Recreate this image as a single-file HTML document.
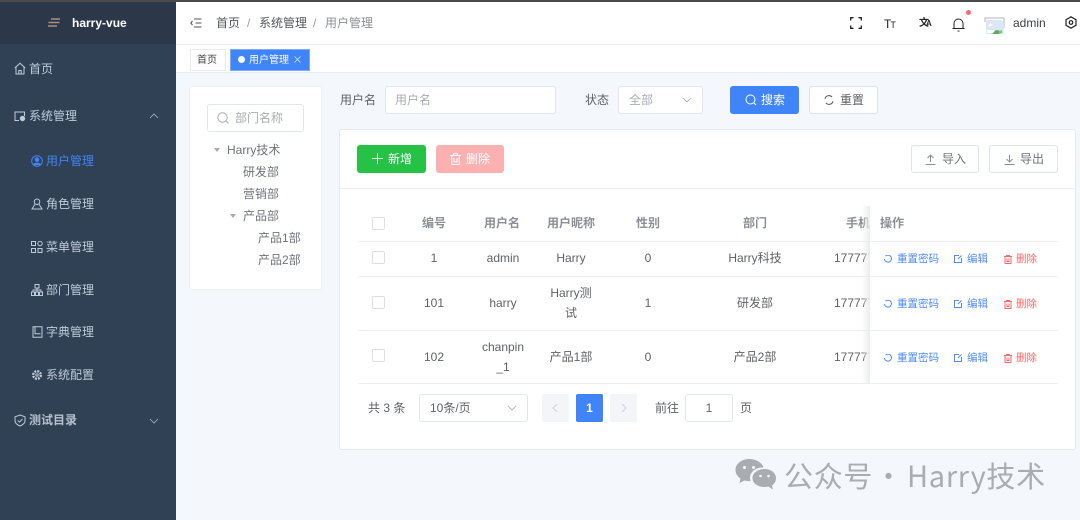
<!DOCTYPE html>
<html style="background:#f4f7fc"><head><meta charset="utf-8"><style>
*{box-sizing:border-box;margin:0;padding:0}
html,body{width:1080px;height:520px;overflow:hidden;background:#f4f7fc;font-family:"Liberation Sans","Noto Sans CJK SC",sans-serif;font-size:12px;color:#606266}
body{filter:blur(.3px)}
.a,.t{position:absolute}
.t{white-space:nowrap;line-height:18px;height:18px}
.c{transform:translateX(-50%)}
.box{position:absolute;background:#fff;border:1px solid #e2e6ef;border-radius:3px}
.m{color:#bfcbd9}
.th{font-weight:bold;color:#8c8f96}
.cb{position:absolute;left:372px;width:13px;height:13px;border:1px solid #dcdfe6;border-radius:2px;background:#fff}
.hl{position:absolute;left:358px;width:700px;height:1px;background:#ebeef5}
.btn{position:absolute;height:28px;border-radius:3px;border:1px solid #dfe3ec;background:#fff}
.link{font-size:10.5px;color:#4f8cf7}.del{font-size:10.5px;color:#f56c6c}
svg{position:absolute;fill:none;stroke:currentColor}
</style></head><body>
<div class="a" style="left:0;top:0;width:1080px;height:2px;background:#4a4a4a"></div>
<div class="a" style="left:0;top:2px;width:176px;height:518px;background:#304156"></div>
<div class="a" style="left:0;top:2px;width:176px;height:42px;background:#2c3749"></div>
<div class="a" style="left:176px;top:2px;width:904px;height:70px;background:#fff"></div>
<div class="a" style="left:176px;top:44px;width:904px;height:1px;background:#eceff4"></div>
<div class="a" style="left:176px;top:72px;width:904px;height:1px;background:#e8ecf3"></div>

<svg style="left:47px;top:17px;color:#a8907e" width="14" height="12" viewBox="0 0 14 12" stroke-width="1.400"><path d="M4 2h9M1.500 5.500h11M1 9h9"/></svg>
<div class="t" style="left:72px;top:14px;color:#fff;font-weight:bold">harry-vue</div>

<svg class="m" style="left:14px;top:62px;color:#bfcbd9" width="12" height="13" viewBox="0 0 12 13"><path d="M.8 6L6 1.200 11.200 6M2 5v7h8V5M4.800 12V8.500h2.400V12"/></svg>
<div class="t m" style="left:29px;top:60px">首页</div>
<svg style="left:14px;top:111px;color:#bfcbd9" width="12" height="11" viewBox="0 0 12 11"><path d="M5 9.500H1V1h9.500v4"/><circle cx="8.500" cy="7.500" r="2.200" fill="#bfcbd9"/></svg>
<div class="t m" style="left:29px;top:107px">系统管理</div>
<svg style="left:149px;top:113px;color:#a7b3c1" width="10" height="6" viewBox="0 0 10 6" stroke-width=".8"><path d="M1 5l4-4 4 4"/></svg>

<svg style="left:31px;top:155px;color:#3f84f8" width="12" height="12" viewBox="0 0 12 12"><circle cx="6" cy="6" r="5.300"/><circle cx="6" cy="4.600" r="1.800" fill="#3f84f8"/><path d="M2.600 10c.5-2.500 6.300-2.500 6.800 0" fill="#3f84f8"/></svg>
<div class="t" style="left:46px;top:152px;color:#3f84f8">用户管理</div>
<svg style="left:31px;top:198px;color:#bfcbd9" width="12" height="12" viewBox="0 0 12 12"><circle cx="6" cy="3.800" r="2.800"/><path d="M3.800 6.500L1 11h10L8.200 6.500"/></svg>
<div class="t m" style="left:46px;top:195px">角色管理</div>
<svg style="left:31px;top:241px;color:#bfcbd9" width="12" height="12" viewBox="0 0 12 12"><rect x=".5" y=".5" width="4" height="4"/><circle cx="9" cy="2.500" r="2.200"/><rect x=".5" y="7.500" width="4" height="4"/><rect x="7" y="7.500" width="4" height="4"/></svg>
<div class="t m" style="left:46px;top:238px">菜单管理</div>
<svg style="left:31px;top:284px;color:#bfcbd9" width="12" height="12" viewBox="0 0 12 12"><rect x="4" y=".5" width="4" height="3.500"/><path d="M2 8V6h8v2M6 4v4"/><rect x=".5" y="8" width="3" height="3.500"/><rect x="4.500" y="8" width="3" height="3.500"/><rect x="8.500" y="8" width="3" height="3.500"/></svg>
<div class="t m" style="left:46px;top:281px">部门管理</div>
<svg style="left:32px;top:326px;color:#bfcbd9" width="11" height="12" viewBox="0 0 11 12"><path d="M1 .8h9v10.400H1zM3 .8v7h5.500"/></svg>
<div class="t m" style="left:46px;top:323px">字典管理</div>
<svg style="left:31px;top:369px;color:#bfcbd9" width="12" height="12" viewBox="0 0 12 12"><circle cx="6" cy="6" r="3.800" stroke-width="2.400" stroke-dasharray="2 1"/><circle cx="6" cy="6" r="1.200"/></svg>
<div class="t m" style="left:46px;top:366px">系统配置</div>
<svg style="left:14px;top:414px;color:#bfcbd9" width="12" height="13" viewBox="0 0 12 13"><path d="M6 1l5 1.800v4c0 2.500-2.500 4.200-5 5.200-2.500-1-5-2.700-5-5.200v-4zM3.800 6.500L5.500 8l3-3"/></svg>
<div class="t m" style="left:29px;top:411px;font-weight:bold;color:#b5c0cd">测试目录</div>
<svg style="left:149px;top:418px;color:#a7b3c1" width="10" height="6" viewBox="0 0 10 6" stroke-width=".8"><path d="M1 1l4 4 4-4"/></svg>

<svg style="left:190px;top:18px;color:#555" width="12" height="10" viewBox="0 0 12 10"><path d="M4 1h7.500M5.500 5h6M4 9h7.500M2.500 3L.8 5l1.700 2"/></svg>
<div class="t" style="left:216px;top:14px;color:#55585d">首页</div>
<div class="t" style="left:247px;top:14px;color:#9a9da3">/</div>
<div class="t" style="left:259px;top:14px;color:#55585d">系统管理</div>
<div class="t" style="left:313px;top:14px;color:#9a9da3">/</div>
<div class="t" style="left:325px;top:14px;color:#8d9096">用户管理</div>

<svg style="left:850px;top:17px;color:#222" width="12" height="12" viewBox="0 0 12 12" stroke-width="1.300"><path d="M.7 3.500V.7h2.800M8.500.7h2.800v2.800M11.300 8.500v2.800H8.500M3.500 11.300H.7V8.500"/></svg>
<div class="t" style="left:884px;top:15px;color:#222;font-size:12px;letter-spacing:-1px">T<span style="font-size:9px">T</span></div>
<div class="t" style="left:919px;top:15px;color:#222;font-size:10px;font-weight:bold">文<span style="font-size:8px;margin-left:-3px">A</span></div>
<svg style="left:952px;top:17px;color:#222" width="13" height="15" viewBox="0 0 13 15"><path d="M2 11V6.500a4.500 4.500 0 0 1 9 0V11M.5 11.500h12M5.500 14h2"/></svg>
<div class="a" style="left:966px;top:10px;width:5px;height:5px;border-radius:50%;background:#f56c6c"></div>
<svg style="left:984px;top:17px;stroke:none" width="21" height="18" viewBox="0 0 21 18"><path d="M1 3V1h19v2M1 1v4M20 1v10" stroke="#b0b4ba" stroke-width="1"/><path fill="#dbe6f8" d="M2 3h15l3 3v11H2z"/><path fill="#fff" d="M6 6l3 2-5 2zM3 13h7v3H3z"/><path fill="#5aae55" d="M8 17l4-4 5 1-2 3z"/><path fill="#7fc77a" d="M15 14l3-1v3l-3 1z"/></svg>
<div class="t" style="left:1013px;top:14px;color:#3c3f44;font-size:12px">admin</div>
<svg style="left:1065px;top:16px;color:#222" width="12" height="13" viewBox="0 0 12 13" stroke-width="1.200"><path d="M6 .8l5 2.900v5.600l-5 2.900-5-2.900V3.700z"/><circle cx="6" cy="6.500" r="1.800"/></svg>

<div class="box" style="left:190px;top:49px;width:36px;height:22px;border-radius:0;border-color:#e6e9ef"></div>
<div class="t" style="left:197px;top:52px;font-size:10px;color:#444">首页</div>
<div class="a" style="left:230px;top:49px;width:80px;height:22px;background:#3f84f8;border:1px solid #7eaaf7"></div>
<div class="a" style="left:238px;top:56px;width:7px;height:7px;border-radius:50%;background:#fff"></div>
<div class="t" style="left:249px;top:52px;font-size:10px;color:#fff">用户管理</div>
<svg style="left:294px;top:56px;color:#dfe9fd" width="7" height="7" viewBox="0 0 7 7" stroke-width=".8"><path d="M.5.500l6 6M6.500.500l-6 6"/></svg>

<div class="box" style="left:189px;top:86px;width:133px;height:204px;border-color:#eceff5"></div>
<div class="box" style="left:207px;top:104px;width:97px;height:28px"></div>
<svg style="left:217px;top:112px;color:#a8abb2" width="12" height="12" viewBox="0 0 12 12"><circle cx="5.500" cy="5.500" r="4.700"/><path d="M9 9l2.500 2.500"/></svg>
<div class="t" style="left:235px;top:109px;color:#a8abb2">部门名称</div>
<div class="a" style="left:214px;top:148px;border:3.500px solid transparent;border-top:4px solid #a8abb2;border-bottom:0"></div>
<div class="t" style="left:227px;top:141px;color:#707379">Harry技术</div>
<div class="t" style="left:243px;top:163px;color:#707379">研发部</div>
<div class="t" style="left:243px;top:185px;color:#707379">营销部</div>
<div class="a" style="left:230px;top:214px;border:3.500px solid transparent;border-top:4px solid #a8abb2;border-bottom:0"></div>
<div class="t" style="left:243px;top:207px;color:#707379">产品部</div>
<div class="t" style="left:258px;top:229px;color:#707379">产品1部</div>
<div class="t" style="left:258px;top:251px;color:#707379">产品2部</div>

<div class="t" style="left:340px;top:91px;color:#606266">用户名</div>
<div class="box" style="left:385px;top:86px;width:171px;height:28px"></div>
<div class="t" style="left:395px;top:91px;color:#a8abb2">用户名</div>
<div class="t" style="left:585px;top:91px;color:#606266">状态</div>
<div class="box" style="left:618px;top:86px;width:85px;height:28px"></div>
<div class="t" style="left:629px;top:91px;color:#a8abb2">全部</div>
<svg style="left:682px;top:97px;color:#a8abb2" width="10" height="6" viewBox="0 0 10 6" stroke-width=".8"><path d="M1 1l4 4 4-4"/></svg>
<div class="a" style="left:730px;top:86px;width:69px;height:28px;background:#3f84f8;border-radius:3px"></div>
<svg style="left:745px;top:94px;color:#fff" width="12" height="12" viewBox="0 0 12 12"><circle cx="5.500" cy="5.500" r="4.500"/><path d="M9 9l2 2"/></svg>
<div class="t" style="left:761px;top:91px;color:#fff">搜索</div>
<div class="btn" style="left:809px;top:86px;width:69px"></div>
<svg style="left:824px;top:95px;color:#606266" width="10" height="10" viewBox="0 0 10 10"><path d="M1 4a4 4 0 0 1 7-2M9 6a4 4 0 0 1-7 2"/></svg>
<div class="t" style="left:840px;top:91px;color:#606266">重置</div>

<div class="box" style="left:339px;top:129px;width:737px;height:321px;border-color:#e6e9f0"></div>
<div class="a" style="left:340px;top:188px;width:735px;height:1px;background:#ebeef5"></div>
<div class="a" style="left:357px;top:145px;width:69px;height:28px;background:#26c246;border-radius:3px"></div>
<svg style="left:372px;top:153px;color:#d8f5de" width="11" height="11" viewBox="0 0 11 11"><path d="M5.500 0v11M0 5.500h11"/></svg>
<div class="t" style="left:388px;top:150px;color:#fff">新增</div>
<div class="a" style="left:436px;top:145px;width:68px;height:28px;background:#fdb0b0;border-radius:3px"></div>
<svg style="left:450px;top:153px;color:#fff" width="11" height="12" viewBox="0 0 11 12"><path d="M0 2.500h11M3.500 2.500V.7h4v1.800M1.800 2.500v9h7.400v-9M4 5v4h3V5"/></svg>
<div class="t" style="left:466px;top:150px;color:#fff">删除</div>
<div class="btn" style="left:911px;top:145px;width:68px"></div>
<svg style="left:925px;top:154px;color:#8d9096" width="11" height="11" viewBox="0 0 11 11"><path d="M5.500 8V1M2.500 4l3-3 3 3M.5 10.500h10"/></svg>
<div class="t" style="left:942px;top:150px;color:#707379">导入</div>
<div class="btn" style="left:989px;top:145px;width:69px"></div>
<svg style="left:1004px;top:154px;color:#8d9096" width="11" height="11" viewBox="0 0 11 11"><path d="M5.500 1v7M2.500 5l3 3 3-3M.5 10.500h10"/></svg>
<div class="t" style="left:1020px;top:150px;color:#707379">导出</div>

<div class="hl" style="top:241px"></div><div class="hl" style="top:276px"></div><div class="hl" style="top:330px"></div><div class="hl" style="top:383px"></div>
<div class="cb" style="top:217px"></div><div class="cb" style="top:251px"></div><div class="cb" style="top:296px"></div><div class="cb" style="top:349px"></div>

<div class="t th c" style="left:434px;top:214px">编号</div>
<div class="t th c" style="left:502px;top:214px">用户名</div>
<div class="t th c" style="left:571px;top:214px">用户昵称</div>
<div class="t th c" style="left:648px;top:214px">性别</div>
<div class="t th c" style="left:755px;top:214px">部门</div>
<div class="t th" style="left:846px;top:214px">手机</div>
<div class="t c" style="left:434px;top:249px">1</div>
<div class="t c" style="left:503px;top:249px">admin</div>
<div class="t c" style="left:571px;top:249px">Harry</div>
<div class="t c" style="left:648px;top:249px">0</div>
<div class="t c" style="left:755px;top:249px">Harry科技</div>
<div class="t c" style="left:434px;top:294px">101</div>
<div class="t c" style="left:503px;top:294px">harry</div>
<div class="t c" style="left:571px;top:284px">Harry测</div>
<div class="t c" style="left:571px;top:304px">试</div>
<div class="t c" style="left:648px;top:294px">1</div>
<div class="t c" style="left:755px;top:294px">研发部</div>
<div class="t c" style="left:434px;top:348px">102</div>
<div class="t c" style="left:503px;top:338px">chanpin</div>
<div class="t c" style="left:503px;top:358px">_1</div>
<div class="t c" style="left:571px;top:348px">产品1部</div>
<div class="t c" style="left:648px;top:348px">0</div>
<div class="t c" style="left:755px;top:348px">产品2部</div>
<div class="t" style="left:834px;top:249px">177777</div>
<div class="t" style="left:834px;top:294px">177777</div>
<div class="t" style="left:834px;top:348px">177777</div>

<div class="a" style="left:862px;top:206px;width:8px;height:178px;background:linear-gradient(90deg,rgba(232,233,237,0),#ebecef)"></div>
<div class="a" style="left:870px;top:206px;width:188px;height:178px;background:#fff"></div>
<div class="hl" style="top:241px;left:870px;width:188px"></div><div class="hl" style="top:276px;left:870px;width:188px"></div><div class="hl" style="top:330px;left:870px;width:188px"></div><div class="hl" style="top:383px;left:870px;width:188px"></div>
<div class="t th" style="left:880px;top:214px">操作</div>

<svg style="left:884px;top:255px;color:#4f8cf7" width="8" height="8" viewBox="0 0 8 8"><path d="M1.500 1.200A3.500 3.500 0 1 1 .5 4"/></svg>
<div class="t link" style="left:897px;top:250px">重置密码</div>
<svg style="left:954px;top:255px;color:#4f8cf7" width="8" height="8" viewBox="0 0 8 8"><path d="M5 .5H.5v7h7V3M4 4l3.500-3.500"/></svg>
<div class="t link" style="left:967px;top:250px">编辑</div>
<svg style="left:1004px;top:255px;color:#f56c6c" width="8" height="9" viewBox="0 0 8 9"><path d="M0 1.500h8M2.500 1.500V.5h3v1M1 1.500v7h6v-7M3 3.500v3h2v-3"/></svg>
<div class="t del" style="left:1016px;top:250px">删除</div>

<svg style="left:884px;top:300px;color:#4f8cf7" width="8" height="8" viewBox="0 0 8 8"><path d="M1.500 1.200A3.500 3.500 0 1 1 .5 4"/></svg>
<div class="t link" style="left:897px;top:295px">重置密码</div>
<svg style="left:954px;top:300px;color:#4f8cf7" width="8" height="8" viewBox="0 0 8 8"><path d="M5 .5H.5v7h7V3M4 4l3.500-3.500"/></svg>
<div class="t link" style="left:967px;top:295px">编辑</div>
<svg style="left:1004px;top:300px;color:#f56c6c" width="8" height="9" viewBox="0 0 8 9"><path d="M0 1.500h8M2.500 1.500V.5h3v1M1 1.500v7h6v-7M3 3.500v3h2v-3"/></svg>
<div class="t del" style="left:1016px;top:295px">删除</div>

<svg style="left:884px;top:354px;color:#4f8cf7" width="8" height="8" viewBox="0 0 8 8"><path d="M1.500 1.200A3.500 3.500 0 1 1 .5 4"/></svg>
<div class="t link" style="left:897px;top:349px">重置密码</div>
<svg style="left:954px;top:354px;color:#4f8cf7" width="8" height="8" viewBox="0 0 8 8"><path d="M5 .5H.5v7h7V3M4 4l3.500-3.500"/></svg>
<div class="t link" style="left:967px;top:349px">编辑</div>
<svg style="left:1004px;top:354px;color:#f56c6c" width="8" height="9" viewBox="0 0 8 9"><path d="M0 1.500h8M2.500 1.500V.5h3v1M1 1.500v7h6v-7M3 3.500v3h2v-3"/></svg>
<div class="t del" style="left:1016px;top:349px">删除</div>

<div class="t" style="left:368px;top:399px">共 3 条</div>
<div class="box" style="left:419px;top:394px;width:109px;height:28px"></div>
<div class="t" style="left:430px;top:399px">10条/页</div>
<svg style="left:507px;top:405px;color:#a8abb2" width="10" height="6" viewBox="0 0 10 6" stroke-width=".8"><path d="M1 1l4 4 4-4"/></svg>
<div class="a" style="left:542px;top:394px;width:27px;height:28px;background:#f4f5f8;border-radius:2px"></div>
<svg style="left:552px;top:403px;color:#c4c7cd" width="6" height="10" viewBox="0 0 6 10" stroke-width=".8"><path d="M5 1L1 5l4 4"/></svg>
<div class="a" style="left:576px;top:394px;width:27px;height:28px;background:#3f84f8;border-radius:2px"></div>
<div class="t c" style="left:589.500px;top:399px;color:#fff;font-weight:bold">1</div>
<div class="a" style="left:610px;top:394px;width:27px;height:28px;background:#f4f5f8;border-radius:2px"></div>
<svg style="left:621px;top:403px;color:#c4c7cd" width="6" height="10" viewBox="0 0 6 10" stroke-width=".8"><path d="M1 1l4 4-4 4"/></svg>
<div class="t" style="left:655px;top:399px">前往</div>
<div class="box" style="left:685px;top:394px;width:48px;height:28px"></div>
<div class="t c" style="left:709px;top:399px">1</div>
<div class="t" style="left:740px;top:399px">页</div>

<svg style="left:735px;top:458px;stroke:none" width="42" height="36" viewBox="0 0 42 36"><path fill="#a9acb0" d="M14 1C6.500 1 .5 6 .5 12c0 3.500 2 6.500 5 8.500L4.500 25l5-2.500c1.500.4 3 .6 4.500.6.500 0 1 0 1.500-.1-.3-1-.5-2-.5-3 0-6 5.500-10.500 12.500-10.500h1C27 4.500 21 1 14 1z"/><path fill="#a9acb0" d="M41 20c0-5-5-9-11.500-9S17.500 15 17.500 20s5 9 12 9c1.300 0 2.600-.2 3.800-.5L38 31.500l-1-4c2.500-1.800 4-4.500 4-7.500z"/><circle cx="9.500" cy="9.500" r="1.500" fill="#f4f7fc"/><circle cx="18.500" cy="9.500" r="1.500" fill="#f4f7fc"/><circle cx="25.500" cy="18" r="1.300" fill="#f4f7fc"/><circle cx="33.500" cy="18" r="1.300" fill="#f4f7fc"/></svg>
<div class="t" style="left:784px;top:456px;height:38px;line-height:38px;font-size:29px;color:#a9acb0;letter-spacing:.7px;font-family:'Noto Sans CJK SC',sans-serif">公众号</div>
<div class="t" style="left:874px;top:456px;height:38px;line-height:38px;font-size:29px;color:#a9acb0;font-family:'Noto Sans CJK SC',sans-serif">·</div>
<div class="t" style="left:907px;top:456px;height:38px;line-height:38px;font-size:29px;color:#a9acb0;letter-spacing:.7px;font-family:'Noto Sans CJK SC',sans-serif">Harry技术</div>
</body></html>
